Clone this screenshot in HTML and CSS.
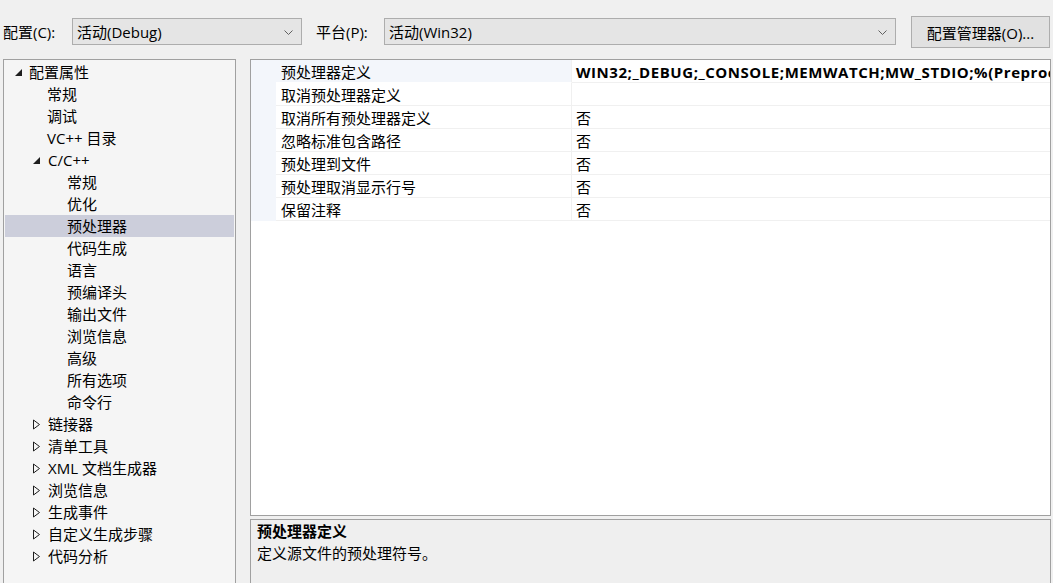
FILE: index.html
```html
<!DOCTYPE html>
<html lang="zh-CN">
<head>
    <meta charset="UTF-8">
    <title>属性页</title>
    <link rel="stylesheet" href="styles.css">
</head>
<body>
    <div class="toolbar">
        <label class="field-label">配置(C):</label>
        <div class="combo combo-config">
            <span>活动(Debug)</span>
            <svg class="chevron" width="9" height="5" viewBox="0 0 9 5"><path d="M0.5 0.5 L4.5 4.5 L8.5 0.5" fill="none" stroke="#606060" stroke-width="1"/></svg>
        </div>
        <label class="field-label platform-label">平台(P):</label>
        <div class="combo combo-platform">
            <span>活动(Win32)</span>
            <svg class="chevron" width="9" height="5" viewBox="0 0 9 5"><path d="M0.5 0.5 L4.5 4.5 L8.5 0.5" fill="none" stroke="#606060" stroke-width="1"/></svg>
        </div>
        <button class="manager-button">配置管理器(O)...</button>
    </div>

    <div class="main">
        <div class="tree">
            <div class="tree-item level-0"><svg class="arrow" width="9" height="9" viewBox="0 0 9 9"><polygon points="8,1 8,8 1,8" fill="#1e1e1e"/></svg>配置属性</div>
            <div class="tree-item level-1 leaf">常规</div>
            <div class="tree-item level-1 leaf">调试</div>
            <div class="tree-item level-1 leaf">VC++ 目录</div>
            <div class="tree-item level-1"><svg class="arrow" width="9" height="9" viewBox="0 0 9 9"><polygon points="8,1 8,8 1,8" fill="#1e1e1e"/></svg>C/C++</div>
            <div class="tree-item level-2">常规</div>
            <div class="tree-item level-2">优化</div>
            <div class="tree-item level-2 selected">预处理器</div>
            <div class="tree-item level-2">代码生成</div>
            <div class="tree-item level-2">语言</div>
            <div class="tree-item level-2">预编译头</div>
            <div class="tree-item level-2">输出文件</div>
            <div class="tree-item level-2">浏览信息</div>
            <div class="tree-item level-2">高级</div>
            <div class="tree-item level-2">所有选项</div>
            <div class="tree-item level-2">命令行</div>
            <div class="tree-item level-1"><svg class="arrow" width="9" height="11" viewBox="0 0 9 11"><polygon points="1.5,1 7.5,5.5 1.5,10" fill="none" stroke="#1e1e1e" stroke-width="1"/></svg>链接器</div>
            <div class="tree-item level-1"><svg class="arrow" width="9" height="11" viewBox="0 0 9 11"><polygon points="1.5,1 7.5,5.5 1.5,10" fill="none" stroke="#1e1e1e" stroke-width="1"/></svg>清单工具</div>
            <div class="tree-item level-1"><svg class="arrow" width="9" height="11" viewBox="0 0 9 11"><polygon points="1.5,1 7.5,5.5 1.5,10" fill="none" stroke="#1e1e1e" stroke-width="1"/></svg>XML 文档生成器</div>
            <div class="tree-item level-1"><svg class="arrow" width="9" height="11" viewBox="0 0 9 11"><polygon points="1.5,1 7.5,5.5 1.5,10" fill="none" stroke="#1e1e1e" stroke-width="1"/></svg>浏览信息</div>
            <div class="tree-item level-1"><svg class="arrow" width="9" height="11" viewBox="0 0 9 11"><polygon points="1.5,1 7.5,5.5 1.5,10" fill="none" stroke="#1e1e1e" stroke-width="1"/></svg>生成事件</div>
            <div class="tree-item level-1"><svg class="arrow" width="9" height="11" viewBox="0 0 9 11"><polygon points="1.5,1 7.5,5.5 1.5,10" fill="none" stroke="#1e1e1e" stroke-width="1"/></svg>自定义生成步骤</div>
            <div class="tree-item level-1"><svg class="arrow" width="9" height="11" viewBox="0 0 9 11"><polygon points="1.5,1 7.5,5.5 1.5,10" fill="none" stroke="#1e1e1e" stroke-width="1"/></svg>代码分析</div>
        </div>

        <div class="right-side">
            <div class="property-grid">
                <div class="prop-row current">
                    <div class="prop-margin"></div>
                    <div class="prop-name">预处理器定义</div>
                    <div class="prop-value bold">WIN32;_DEBUG;_CONSOLE;MEMWATCH;MW_STDIO;%(Preproc</div>
                </div>
                <div class="prop-row">
                    <div class="prop-margin"></div>
                    <div class="prop-name">取消预处理器定义</div>
                    <div class="prop-value"></div>
                </div>
                <div class="prop-row">
                    <div class="prop-margin"></div>
                    <div class="prop-name">取消所有预处理器定义</div>
                    <div class="prop-value">否</div>
                </div>
                <div class="prop-row">
                    <div class="prop-margin"></div>
                    <div class="prop-name">忽略标准包含路径</div>
                    <div class="prop-value">否</div>
                </div>
                <div class="prop-row">
                    <div class="prop-margin"></div>
                    <div class="prop-name">预处理到文件</div>
                    <div class="prop-value">否</div>
                </div>
                <div class="prop-row">
                    <div class="prop-margin"></div>
                    <div class="prop-name">预处理取消显示行号</div>
                    <div class="prop-value">否</div>
                </div>
                <div class="prop-row">
                    <div class="prop-margin"></div>
                    <div class="prop-name">保留注释</div>
                    <div class="prop-value">否</div>
                </div>
            </div>
            <div class="description">
                <div class="desc-title">预处理器定义</div>
                <div class="desc-text">定义源文件的预处理符号。</div>
            </div>
        </div>
    </div>
</body>
</html>
```

FILE: styles.css
```css
* {
    margin: 0;
    padding: 0;
    box-sizing: border-box;
}

body {
    background: #f0f0f0;
    font-family: 'Open Sans', 'Noto Sans CJK SC', sans-serif;
    font-size: 15px;
    color: #000000;
    width: 1053px;
    height: 583px;
    overflow: hidden;
}

/* Top bar */
.toolbar {
    display: flex;
    align-items: center;
    height: 59px;
    padding: 4px 3px 0 3px;
}

.field-label {
    width: 69px;
    line-height: 20px;
}

.platform-label {
    margin-left: 14px;
    width: 68px;
}

.combo {
    height: 27px;
    background: #e5e5e5;
    border: 1px solid #adadad;
    display: flex;
    align-items: center;
    justify-content: space-between;
    padding: 0 8px 0 4px;
    line-height: 20px;
}

.combo-config {
    width: 230px;
}

.combo-platform {
    width: 512px;
}

.chevron {
    margin-top: 1px;
}

.manager-button {
    margin-left: 15px;
    width: 139px;
    height: 32px;
    background: #e1e1e1;
    border: 1px solid #adadad;
    font-family: inherit;
    font-size: 15px;
    color: #000000;
    margin-top: 1px;
}

/* Main area */
.main {
    display: flex;
    gap: 14px;
}

.tree {
    width: 233px;
    height: 540px;
    background: #f5f5f5;
    border: 1px solid #a0a0a0;
    padding: 1px;
    margin-left: 3px;
}

.tree-item {
    height: 22px;
    line-height: 22px;
    display: flex;
    align-items: center;
    white-space: nowrap;
}

.tree-item .arrow {
    margin-right: 7px;
}

.level-0 {
    padding-left: 9px;
}

.level-0 .arrow {
    margin-right: 6px;
}

.level-1 {
    padding-left: 27px;
}

.level-1.leaf {
    padding-left: 42px;
}

.level-2 {
    padding-left: 62px;
}

.tree-item.selected {
    background: #cccedb;
}

/* Property grid */
.right-side {
    width: 801px;
    display: flex;
    flex-direction: column;
    gap: 3px;
}

.property-grid {
    height: 457px;
    background: #ffffff;
    border: 1px solid #a0a0a0;
}

.prop-row {
    display: flex;
    height: 23px;
    line-height: 24px;
}

.prop-margin {
    width: 25px;
    background: #f3f6fb;
}

.prop-name {
    width: 296px;
    padding-left: 5px;
    border-bottom: 1px solid #f0f0f0;
    border-right: 1px solid #f0f0f0;
}

.prop-value {
    flex: 1;
    padding-left: 4px;
    border-bottom: 1px solid #f0f0f0;
    white-space: nowrap;
    overflow: hidden;
}

.prop-row.current .prop-name {
    background: #f3f6fb;
    border-bottom-color: #ffffff;
}

.prop-value.bold {
    font-weight: bold;
    letter-spacing: 0.55px;
}

/* Description */
.description {
    flex: 1;
    background: #efefef;
    border: 1px solid #a0a0a0;
    padding: 0 6px;
}

.desc-title {
    font-weight: bold;
    line-height: 22px;
}

.desc-text {
    line-height: 22px;
}
```
